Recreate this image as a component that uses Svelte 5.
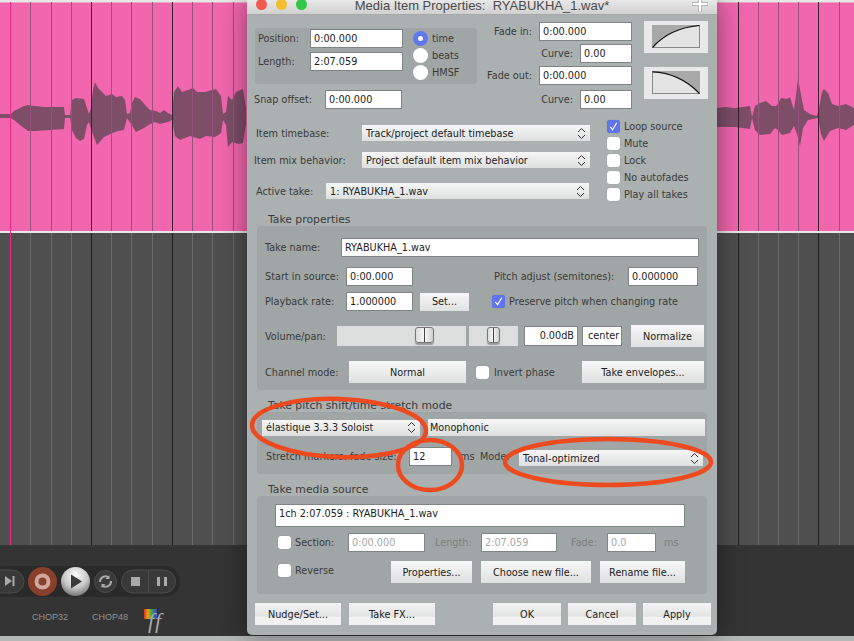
<script>
  const gridX = [30, 51, 71, 91, 111, 131, 152, 172, 192, 212, 233, 738, 758, 778, 798, 818, 839];
  const majors = [91, 172, 738, 818];
  const top1 = [[0,114],[10,114],[12,113],[14,111],[20,108],[24,106],[28,105],[35,106],[45,107],[55,107],[64,107],[65,115],[70,115],[72,100],[76,98],[84,99],[87,108],[89,114],[91,108],[93,90],[95,82],[98,88],[102,92],[106,96],[112,94],[116,97],[122,96],[125,100],[127,114],[130,113],[132,103],[135,97],[140,99],[146,106],[150,110],[156,111],[160,113],[164,110],[168,113],[172,115],[174,92],[178,86],[182,92],[188,90],[193,88],[197,92],[205,92],[216,89],[221,96],[223,114],[226,112],[228,96],[232,100],[236,92],[243,89],[246,108]];
  const bot1 = [[246,124],[243,143],[238,144],[232,142],[228,147],[226,125],[223,120],[221,133],[215,137],[206,136],[200,139],[190,136],[180,140],[175,136],[172,120],[168,122],[160,124],[155,122],[150,124],[144,128],[136,132],[131,124],[127,118],[124,130],[118,131],[110,134],[104,137],[97,145],[92,132],[89,122],[87,125],[84,139],[80,141],[76,138],[72,130],[70,118],[65,118],[64,129],[50,130],[36,131],[28,131],[20,125],[14,120],[10,118],[0,118]];
  const top2 = [[717,108],[725,107],[735,108],[750,106],[752,117],[755,106],[760,103],[766,101],[772,106],[776,106],[778,104],[781,98],[787,99],[790,97],[794,110],[796,95],[798,78],[801,95],[804,110],[810,114],[817,116],[819,108],[822,92],[824,89],[828,93],[832,104],[838,106],[846,104],[854,108]];
  const bot2 = [[854,125],[846,130],[838,128],[830,131],[824,141],[821,134],[818,118],[808,120],[803,128],[800,146],[797,134],[794,126],[790,133],[782,135],[778,130],[775,128],[770,134],[760,135],[755,130],[752,118],[750,129],[735,127],[717,127]];
  const d = (...a) => 'M' + a.flat().map(p => p.join(' ')).join('L') + 'Z';
  const wave1 = d(top1, bot1);
  const wave2 = d(top2, bot2);
</script>

{#snippet select(text, cls)}
  <div class="select {cls}"><span>{text}</span>
    <svg class="updown" viewBox="0 0 9 13" aria-hidden="true"><path d="M1 5 4.5 1.5 8 5M1 8 4.5 11.5 8 8" /></svg>
  </div>
{/snippet}

{#snippet check(on)}
  <span class="cb" class:on>{#if on}<svg viewBox="0 0 14 14" aria-hidden="true"><path d="M3.5 7.5 6 10.5 10.5 3" /></svg>{/if}</span>
{/snippet}

<div class="stage">
  <svg class="daw" width="854" height="641" viewBox="0 0 854 641">
    <defs>
      <radialGradient id="play" cx=".5" cy=".3" r=".75">
        <stop offset="0" stop-color="#fff" /><stop offset=".55" stop-color="#c8c8c8" /><stop offset="1" stop-color="#6a6a6a" />
      </radialGradient>
      <linearGradient id="rainbow">
        <stop offset="0" stop-color="#d9361c" /><stop offset=".3" stop-color="#e8a21c" /><stop offset=".55" stop-color="#4da53a" /><stop offset="1" stop-color="#2a3fd0" />
      </linearGradient>
    </defs>
    <rect width="854" height="641" fill="#b4b9b8" />
    <rect width="854" height="636" fill="#343434" />
    <rect y="233" width="854" height="312" fill="#4f4f4f" />
    <rect y="2" width="854" height="229" fill="#f266ae" />
    <rect width="854" height="2.5" fill="#e8e8e8" />
    <rect y="231" width="854" height="2" fill="#e8e8e8" />
    <path d={wave1} fill="#7e4e69" />
    <path d={wave2} fill="#7e4e69" />
    {#each gridX as x}
      <rect {x} y="2" width="1" height="229" fill={majors.includes(x) ? '#3a2030' : '#96527c'} />
      <rect {x} y="233" width="1" height="312" fill={majors.includes(x) ? '#1e1e1e' : '#6a6a6a'} />
    {/each}
    <rect x="10" y="2" width="1" height="543" fill="#f0288c" />

    <rect x="-10" y="566" width="190" height="31" rx="15" fill="#2a2a2a" />
    <rect x="-20" y="570" width="44" height="23" rx="11.5" fill="#393939" stroke="#4c4c4c" />
    <path d="M5 576v10l7-5zM12.500 576h2v10h-2z" fill="#aaa" />
    <circle cx="42.500" cy="581.500" r="14.500" fill="#87402c" />
    <circle cx="42.500" cy="581.500" r="6" fill="none" stroke="#d3a79c" stroke-width="4" />
    <circle cx="75.500" cy="581.500" r="14.500" fill="url(#play)" />
    <path d="M71 574.500v14l11-7z" fill="#3c3c3c" />
    <circle cx="105.500" cy="581.500" r="11" fill="#3a3a3a" stroke="#4c4c4c" />
    <path d="M100 582a5.500 5.500 0 0 1 9-4.500M111 581a5.500 5.500 0 0 1-9 4.500" fill="none" stroke="#aaa" stroke-width="2" />
    <path d="M109.500 575v4h-4zM101.500 588v-4h4z" fill="#aaa" />
    <rect x="121.500" y="570" width="54" height="23" rx="11.500" fill="#393939" stroke="#4c4c4c" />
    <rect x="148" y="570" width="1" height="23" fill="#4c4c4c" />
    <rect x="131" y="577" width="9" height="9" fill="#aaa" />
    <path d="M157 577h3v9h-3zM164 577h3v9h-3z" fill="#aaa" />
    <text class="chop" x="32" y="620">CHOP32</text>
    <text class="chop" x="92" y="620">CHOP48</text>
    <rect x="144" y="609" width="13" height="10" fill="url(#rainbow)" />
    <text class="ff" x="148" y="628">ff</text>
  </svg>

  <div class="dialog">
    <div class="titlebar">
      <i class="light red"></i><i class="light yellow"></i><i class="light green"></i>
      <span class="title">Media Item Properties:&nbsp; RYABUKHA_1.wav*</span>
    </div>

    <div class="top">
      <div class="top-left">
        <div class="pos-group">
          <div class="pos-fields">
            <div class="row"><label class="pl">Position:</label><span class="input w93">0:00.000</span></div>
            <div class="row"><label class="pl">Length:</label><span class="input w93">2:07.059</span></div>
          </div>
          <div class="radios">
            <div class="radio-row"><span class="radio on"></span>time</div>
            <div class="radio-row"><span class="radio"></span>beats</div>
            <div class="radio-row"><span class="radio"></span>HMSF</div>
          </div>
        </div>
        <div class="row snap"><label class="sl">Snap offset:</label><span class="input w77">0:00.000</span></div>
      </div>
      <div class="fade-fields">
        <div class="row end"><label>Fade in:</label><span class="input w93">0:00.000</span></div>
        <div class="row end r3"><label>Curve:</label><span class="input w52">0.00</span></div>
        <div class="row end r3"><label>Fade out:</label><span class="input w93">0:00.000</span></div>
        <div class="row end r5"><label>Curve:</label><span class="input w52">0.00</span></div>
      </div>
      <div class="fade-graphs">
        <div class="graph"><svg viewBox="0 0 48 23" width="48" height="23"><rect x=".5" y=".5" width="47" height="22" fill="#e4e4e4" stroke="#888" /><path d="M0 23Q18 3 48 .5V0H0Z" fill="#a8a8a8" /><path d="M.5 22.500Q18 3 47.500 .5" fill="none" stroke="#111" stroke-width="1.200" /></svg></div>
        <div class="graph g2"><svg viewBox="0 0 48 23" width="48" height="23"><rect x=".5" y=".5" width="47" height="22" fill="#e4e4e4" stroke="#888" /><path d="M0 0Q28 2 48 23V0Z" fill="#a8a8a8" /><path d="M.5 .8Q28 2 47.500 22.500" fill="none" stroke="#111" stroke-width="1.200" /></svg></div>
      </div>
    </div>

    <div class="mid">
      <div class="selects">
        <div class="row srow"><label class="ml a">Item timebase:</label>{@render select('Track/project default timebase', 'w228')}</div>
        <div class="row srow s2"><label class="ml b">Item mix behavior:</label>{@render select('Project default item mix behavior', 'w228')}</div>
        <div class="row srow s3"><label class="ml3">Active take:</label>{@render select('1: RYABUKHA_1.wav', 'w263')}</div>
      </div>
      <div class="checks">
        <div class="check-row">{@render check(true)}Loop source</div>
        <div class="check-row">{@render check(false)}Mute</div>
        <div class="check-row">{@render check(false)}Lock</div>
        <div class="check-row">{@render check(false)}No autofades</div>
        <div class="check-row">{@render check(false)}Play all takes</div>
      </div>
    </div>

    <div class="caption">Take properties</div>
    <section class="group take">
      <div class="row"><label class="tl76">Take name:</label><span class="input w358">RYABUKHA_1.wav</span></div>
      <div class="row r10">
        <label class="tl81">Start in source:</label><span class="input w67">0:00.000</span>
        <label class="pitch-label">Pitch adjust (semitones):</label><span class="input w70">0.000000</span>
      </div>
      <div class="row r6">
        <label class="tl81">Playback rate:</label><span class="input w67">1.000000</span>
        <button class="btn set">Set...</button>
        <span class="preserve">{@render check(true)}Preserve pitch when changing rate</span>
      </div>
      <div class="row vol">
        <label class="tl72">Volume/pan:</label>
        <div class="slider sv"><span class="thumb t1"></span></div>
        <div class="slider sp"><span class="thumb t2"></span></div>
        <span class="input db">0.00dB</span>
        <span class="input center">center</span>
        <button class="btn norm">Normalize</button>
      </div>
      <div class="row chan">
        <label class="tl84">Channel mode:</label>
        <button class="btn normal">Normal</button>
        <span class="invert">{@render check(false)}Invert phase</span>
        <button class="btn env">Take envelopes...</button>
      </div>
    </section>

    <div class="caption c2">Take pitch shift/time stretch mode</div>
    <section class="group pitch">
      <div class="row">
        {@render select('élastique 3.3.3 Soloist', 'w158')}
        <span class="mono">Monophonic</span>
      </div>
      <div class="row stretch">
        <label class="tl143">Stretch markers: fade size:</label><span class="input w43">12</span>
        <span class="ms">ms</span><span class="mode">Mode:</span>
        {@render select('Tonal-optimized', 'w184')}
      </div>
    </section>

    <div class="caption c3">Take media source</div>
    <section class="group media">
      <div class="input file">1ch 2:07.059 : RYABUKHA_1.wav</div>
      <div class="row sec">
        <span class="sec-check">{@render check(false)}Section:</span>
        <span class="input w77 dis">0:00.000</span>
        <span class="dim len">Length:</span>
        <span class="input w76 dis">2:07.059</span>
        <span class="dim fd">Fade:</span>
        <span class="input w49 dis">0.0</span>
        <span class="dim msd">ms</span>
      </div>
      <div class="row rev">
        <span class="rev-check">{@render check(false)}Reverse</span>
        <button class="btn p">Properties...</button>
        <button class="btn c">Choose new file...</button>
        <button class="btn rn">Rename file...</button>
      </div>
    </section>

    <div class="footer">
      <button class="btn foot wide">Nudge/Set...</button>
      <button class="btn foot wide">Take FX...</button>
      <span class="spacer"></span>
      <button class="btn foot">OK</button>
      <button class="btn foot">Cancel</button>
      <button class="btn foot">Apply</button>
    </div>
  </div>

  <svg class="marks" width="854" height="641" viewBox="0 0 854 641" aria-hidden="true">
    <ellipse cx="339" cy="428" rx="87" ry="29" transform="rotate(2 339 428)" />
    <ellipse cx="430" cy="465" rx="32" ry="25" />
    <ellipse cx="608" cy="462" rx="103" ry="23" />
  </svg>
  <svg class="cursor" width="16" height="16" viewBox="0 0 16 16" aria-hidden="true"><path d="M6.500 0h3v6.500H16v3H9.500V16h-3V9.500H0v-3h6.500Z" /></svg>
</div>

<style>
  :global(body) { margin: 0; }
  .stage { position: relative; width: 854px; height: 641px; overflow: hidden; background: #333; font-family: "DejaVu Sans", sans-serif; font-size: 9.7px; color: #3a3a3a; }
  .daw, .marks, .cursor { position: absolute; left: 0; top: 0; }
  .marks { pointer-events: none; }
  .marks ellipse { fill: none; stroke: #ee4a1f; stroke-width: 4.5; }
  .cursor { left: 692px; top: -4px; fill: #fff; stroke: #999; stroke-width: .7; }
  .chop { font: 9px "Liberation Sans", sans-serif; fill: #929292; }
  .ff { font: italic 22px "Liberation Serif", serif; fill: #aaa; letter-spacing: 1px; }

  .dialog { position: absolute; left: 247px; top: 0; width: 470px; height: 635px; box-sizing: border-box; display: flex; flex-direction: column; background: #abb1b0; border-radius: 0 0 5px 5px; box-shadow: 0 0 28px rgba(0, 0, 0, .45); }
  .titlebar { flex: none; height: 14px; position: relative; display: flex; justify-content: center; background: linear-gradient(#e8e8e8, #d0d0d0); border-bottom: 1px solid #a8a8a8; box-sizing: content-box; overflow: hidden; }
  .title { font: 13px "Liberation Sans", sans-serif; line-height: 11px; color: #4a4a4a; white-space: nowrap; }
  .light { position: absolute; top: -1px; width: 11px; height: 11px; border-radius: 50%; }
  .red { left: 9px; background: #f25a50; }
  .yellow { left: 29px; background: #f5bd30; }
  .green { left: 49px; background: #33c748; }

  .row { display: flex; align-items: center; }
  label { white-space: nowrap; display: block; }
  .input { display: block; box-sizing: border-box; background: #fff; border: 1px solid #7f8584; height: 19px; line-height: 17px; padding-left: 3px; color: #222; white-space: nowrap; overflow: hidden; }
  .w93 { width: 93px; } .w77 { width: 77px; } .w52 { width: 52px; } .w358 { width: 358px; } .w67 { width: 67px; } .w70 { width: 70px; } .w43 { width: 43px; } .w76 { width: 76px; } .w49 { width: 49px; }

  .top { flex: none; display: flex; height: 95px; }
  .top-left { margin: 13px 0 0 8px; width: 230px; }
  .pos-group { width: 222px; height: 56px; box-sizing: border-box; padding-top: 1px; display: flex; background: #a0a6a5; border-radius: 4px; }
  .pos-fields { display: flex; flex-direction: column; gap: 4px; }
  .pl { width: 55px; padding-left: 3px; box-sizing: border-box; }
  .radios { margin: 1px 0 0 10px; display: flex; flex-direction: column; }
  .radio-row { height: 17px; display: flex; align-items: center; gap: 4px; }
  .radio { width: 15px; height: 15px; border-radius: 50%; background: #fff; display: grid; place-items: center; }
  .radio.on { background: #5f78f0; }
  .radio.on::after { content: ""; width: 5px; height: 5px; border-radius: 50%; background: #fff; }
  .snap { margin: 6px 0 0 -1px; }
  .sl { width: 71px; }
  .fade-fields { margin-top: 7px; width: 147px; display: flex; flex-direction: column; }
  .end { justify-content: flex-end; gap: 7px; }
  .r3 { margin-top: 3px; } .r5 { margin-top: 5px; }
  .fade-graphs { margin: 6px 0 0 12px; }
  .graph { width: 64px; height: 32px; background: #e9e9e9; padding: 4px 8px 0; box-sizing: border-box; }
  .g2 { margin-top: 14px; }
  .graph svg { display: block; }

  .mid { flex: none; height: 102px; padding-top: 8px; box-sizing: border-box; display: flex; }
  .selects { width: 360px; padding-top: 7px; }
  .srow { height: 16px; }
  .s2 { margin-top: 11px; } .s3 { margin-top: 15px; }
  .ml { width: 115px; box-sizing: border-box; }
  .a { padding-left: 9px; } .b { padding-left: 7px; }
  .ml3 { width: 79px; padding-left: 9px; box-sizing: border-box; }
  .select { height: 16px; box-sizing: border-box; display: flex; align-items: center; justify-content: space-between; padding: 0 4px; background: linear-gradient(#f6f6f6, #dedfdf); color: #222; white-space: nowrap; }
  .updown { width: 9px; height: 13px; fill: none; stroke: #333; stroke-width: 1; }
  .w228 { width: 228px; } .w263 { width: 263px; } .w158 { width: 158px; } .w184 { width: 184px; }
  .checks { display: flex; flex-direction: column; }
  .check-row { height: 17px; display: flex; align-items: center; gap: 4px; white-space: nowrap; }
  .cb { flex: none; width: 13px; height: 13px; border-radius: 3px; background: #fff; display: block; box-shadow: 0 0 1px rgba(0, 0, 0, .3); }
  .cb.on { background: #5f74ef; }
  .cb svg { display: block; fill: none; stroke: #fff; stroke-width: 1.300; }

  .caption { flex: none; height: 14px; line-height: 16px; margin-left: 21px; font-size: 10.8px; }
  .group { flex: none; margin-left: 10px; width: 450px; box-sizing: border-box; background: #a0a6a5; border-radius: 4px; }
  .take { height: 164px; padding: 12px 0 0 8px; }
  .tl76 { width: 76px; } .tl81 { width: 81px; } .tl72 { width: 72px; } .tl84 { width: 84px; } .tl143 { width: 143px; }
  .r10 { margin-top: 10px; } .r6 { margin-top: 6px; }
  .pitch-label { margin-left: 81px; width: 134px; }
  .btn { display: block; padding: 0; border: 0; border-radius: 0; background: linear-gradient(#f7f7f7, #dfe0e0); font: inherit; color: #222; white-space: nowrap; text-align: center; }
  .set { margin-left: 7px; width: 49px; height: 18px; }
  .preserve { margin-left: 23px; display: flex; align-items: center; gap: 4px; white-space: nowrap; }
  .vol { margin-top: 14px; height: 22px; }
  .slider { height: 20px; background: #dcdddd; position: relative; }
  .sv { width: 129px; } .sp { width: 49px; margin-left: 3px; }
  .thumb { position: absolute; top: 1px; height: 16px; box-sizing: border-box; border: 1px solid #777; border-radius: 3px; background: linear-gradient(90deg, #ddd, #f6f6f6 48%, #444 48%, #444 53%, #f6f6f6 53%, #ccc); box-shadow: 0 2px 1px rgba(0, 0, 0, .3); }
  .t1 { left: 78px; width: 19px; } .t2 { left: 18px; width: 13px; }
  .db { margin-left: 6px; width: 54px; height: 20px; text-align: right; padding-right: 3px; }
  .center { margin-left: 4px; width: 40px; height: 20px; padding-left: 5px; }
  .norm { margin-left: 9px; width: 73px; height: 22px; }
  .chan { margin-top: 14px; height: 22px; }
  .normal { width: 117px; height: 22px; }
  .invert { margin-left: 10px; width: 106px; display: flex; align-items: center; gap: 5px; white-space: nowrap; }
  .env { width: 122px; height: 22px; }

  .c2 { margin-top: 8px; }
  .pitch { height: 62px; padding: 7px 0 0 5px; }
  .mono { margin-left: 8px; width: 277px; height: 17px; line-height: 17px; padding-left: 2px; box-sizing: border-box; background: linear-gradient(#f6f6f6, #dedfdf); color: #222; }
  .stretch { margin: 11px 0 0 4px; height: 19px; }
  .ms { margin-left: 8px; width: 20px; }
  .mode { width: 39px; }
  .stretch .select { margin-top: 3px; }

  .c3 { margin-top: 8px; }
  .media { height: 98px; padding: 8px 0 0 18px; }
  .file { width: 410px; height: 23px; line-height: 18px; }
  .sec { margin-top: 6px; height: 19px; }
  .sec-check { margin-left: 3px; width: 70px; display: flex; align-items: center; gap: 4px; }
  .dis { color: #a8a8a8; }
  .dim { color: #7c8180; }
  .len { margin-left: 10px; width: 46px; }
  .fd { margin-left: 14px; width: 36px; }
  .msd { margin-left: 8px; }
  .rev { margin-top: 9px; height: 22px; }
  .rev-check { margin-left: 3px; width: 113px; margin-bottom: 3px; display: flex; align-items: center; gap: 4px; }
  .p { width: 81px; height: 22px; } .c { margin-left: 9px; width: 110px; height: 22px; } .rn { margin-left: 9px; width: 85px; height: 22px; }

  .footer { flex: none; display: flex; gap: 7px; margin-top: 9px; padding: 0 6px 0 8px; }
  .spacer { flex: 1; }
  .foot { width: 68px; height: 22px; background: linear-gradient(#f4f4f4, #e2e3e3 60%, #f3f3f3 65%, #f0f0f0); }
  .wide { width: 86px; margin-right: 1px; }
</style>
